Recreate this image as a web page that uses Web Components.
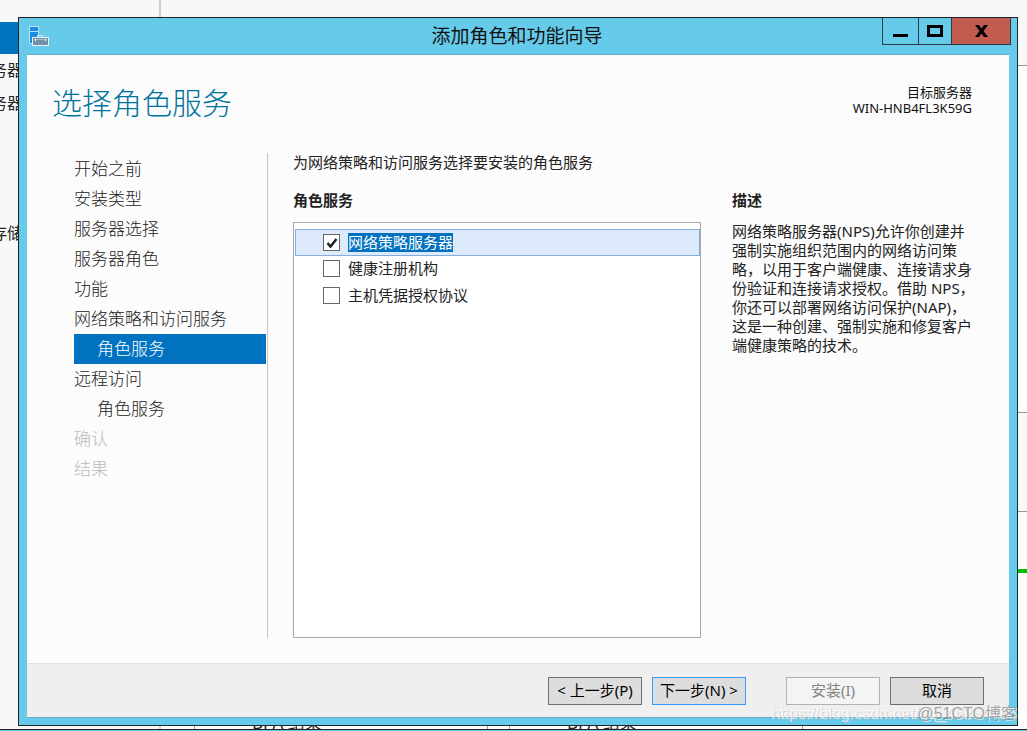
<!DOCTYPE html>
<html lang="zh-CN">
<head>
<meta charset="utf-8">
<title>添加角色和功能向导</title>
<style>
html, body { margin: 0; height: 100%; overflow: hidden; }
body { font: 15px/20px "Noto Sans", "Noto Sans CJK SC", sans-serif; color: #222; }
</style>
</head>
<body>
<server-desktop>
  <wizard-window heading="添加角色和功能向导">
    <wizard-page heading="选择角色服务">
      <target-server slot="target" name="WIN-HNB4FL3K59G">目标服务器</target-server>
      <wizard-nav slot="nav">
        <nav-step>开始之前</nav-step>
        <nav-step>安装类型</nav-step>
        <nav-step>服务器选择</nav-step>
        <nav-step>服务器角色</nav-step>
        <nav-step>功能</nav-step>
        <nav-step>网络策略和访问服务</nav-step>
        <nav-step sub current>角色服务</nav-step>
        <nav-step>远程访问</nav-step>
        <nav-step sub>角色服务</nav-step>
        <nav-step disabled>确认</nav-step>
        <nav-step disabled>结果</nav-step>
      </wizard-nav>
      <role-list>
        <role-item checked selected>网络策略服务器</role-item>
        <role-item>健康注册机构</role-item>
        <role-item>主机凭据授权协议</role-item>
      </role-list>
      <role-description slot="description">网络策略服务器(NPS)允许你创建并强制实施组织范围内的网络访问策略，以用于客户端健康、连接请求身份验证和连接请求授权。借助 NPS，你还可以部署网络访问保护(NAP)，这是一种创建、强制实施和修复客户端健康策略的技术。</role-description>
    </wizard-page>
    <wizard-footer slot="footer">
      <wizard-button>&lt; 上一步(P)</wizard-button>
      <wizard-button primary>下一步(N) &gt;</wizard-button>
      <wizard-button class="apart" disabled>安装(I)</wizard-button>
      <wizard-button>取消</wizard-button>
    </wizard-footer>
  </wizard-window>
  <page-watermark slot="overlay"></page-watermark>
</server-desktop>

<script>
const define = (name, html, setup) => {
  const template = document.createElement('template');
  template.innerHTML = html;
  customElements.define(name, class extends HTMLElement {
    connectedCallback() {
      if (this.shadowRoot) return;
      this.attachShadow({ mode: 'open' }).append(template.content.cloneNode(true));
      if (setup) setup(this, this.shadowRoot);
    }
  });
};

define('server-desktop', `
<style>
:host { display: block; position: relative; height: 100vh; overflow: hidden; background: #fff; }
.back { display: flex; flex-direction: column; height: 100%; }
.main { flex: 1; display: grid; grid-template-columns: 161px 1fr; min-height: 0; }
.side { background: #f8f8f8; border-right: 2px solid #d0d0d0; padding-top: 22px; overflow: hidden; }
.active { height: 32px; background: #0072c0; }
.side span { display: block; height: 33px; line-height: 33px; font-size: 16px; margin-left: -9px; }
.side .gap { margin-top: 97px; }
.tiles { display: flex; flex-direction: column; background: #fcfcfc; min-height: 0; }
.tiles div { box-sizing: border-box; border-bottom: 1px solid #999; }
.top { height: 66px; background: #f8f8f8; }
.white { height: 347px; background: #fff; }
.grey { height: 99px; background: #f8f8f8; }
.tiles .green { margin-top: 57px; height: 4px; background: #00c000; border: 0; }
.tiles .cards { margin-top: auto; display: flex; gap: 21px; padding-left: 33px; border: 0; background: #fff; }
.cards span { box-sizing: border-box; width: 294px; height: 20px; border: solid #999; border-width: 0 1px; padding-left: 57px; font-size: 17px; line-height: 28px; overflow: hidden; }
.bar { height: 1px; background: #66cbea; border-top: 1px solid #222; }
.overlay { position: absolute; right: 10px; bottom: 7px; }
.window { position: absolute; inset: 17px 9px 5px 18px; display: grid; }
</style>
<div class="back">
  <div class="main">
    <div class="side"><div class="active"></div><span>务器</span><span>务器</span><span class="gap">存储</span></div>
    <div class="tiles"><div class="top"></div><div class="white"></div><div class="grey"></div><div class="green"></div>
      <div class="cards"><span>BPA 结果</span><span>BPA 结果</span></div></div>
  </div>
  <div class="bar"></div>
</div>
<div class="window"><slot></slot></div>
<div class="overlay"><slot name="overlay"></slot></div>`);

define('wizard-window', `
<style>
:host { display: flex; flex-direction: column; min-height: 0; border: 1px solid #222; background: #66cbea; padding: 0 8px 7px; }
header { display: grid; grid-template-columns: 125px 1fr 127px; height: 36px; border-bottom: 1px solid #6ba9c3; }
header svg.app { margin: 8px 0 0 2px; }
h1 { margin: 0; font: inherit; font-size: 19px; line-height: 36px; text-align: center; color: #111; }
.controls { display: flex; height: 26px; border: 1px solid #2c3a42; border-top: 0; margin-right: -2px; }
.controls button { box-sizing: border-box; flex: 36 1 0; border: 0; border-right: 1px solid #2c3a42; background: none; padding: 0; display: grid; place-items: center; }
.controls button:nth-child(2) { flex-grow: 33; }
.controls .close { flex-grow: 59; background: #c25b50; border-right: 0; }
main { flex: 1; display: flex; flex-direction: column; min-height: 0; background: #fcfcfc; border-bottom: 1px solid #6ba9c3; }
</style>
<header>
  <svg class="app" width="21" height="21" viewBox="0 0 21 21" aria-hidden="true">
    <rect x="0.5" y="0.5" width="9" height="17" fill="#1e8ae0" stroke="#b4e2f7"/>
    <path d="M1 5.5H9" stroke="#b4e2f7"/>
    <path d="M8.500 11V9.500H13.500V11" fill="none" stroke="#d5e8f0"/>
    <rect x="3.500" y="11.500" width="16" height="8" fill="#7290a8" stroke="#e6f0f5"/>
    <path d="M5 13.500H18" stroke="#a3b8c8"/><path d="M6.500 13V15M16.500 13V15" stroke="#fff"/>
  </svg>
  <h1></h1>
  <div class="controls">
    <button aria-label="最小化"><svg width="15" height="12"><rect y="9" width="15" height="3"/></svg></button>
    <button aria-label="最大化"><svg width="16" height="12"><rect x="1.500" y="1.500" width="13" height="9" fill="none" stroke="#000" stroke-width="3"/></svg></button>
    <button class="close" aria-label="关闭"><svg width="13" height="12"><path d="M0 0H4L6.500 3.500L9 0H13L8.500 6L13 12H9L6.500 8.500L4 12H0L4.500 6Z"/></svg></button>
  </div>
</header>
<main><slot></slot><slot name="footer"></slot></main>`, (host, root) => {
  root.querySelector('h1').textContent = host.getAttribute('heading');
});

define('wizard-page', `
<style>
:host { flex: 1; min-height: 0; display: flex; flex-direction: column; padding: 28px 32px 25px 25px; }
header { display: flex; justify-content: space-between; height: 70px; padding-right: 5px; }
h2 { margin: 0; font-size: 30px; line-height: 40px; font-weight: 300; color: #00739c; }
.body { flex: 1; min-height: 0; display: grid; grid-template-columns: 216px 1fr 245px; }
.list { display: flex; padding: 0 31px 0 25px; min-width: 0; }
</style>
<header><h2></h2><slot name="target"></slot></header>
<div class="body"><slot name="nav"></slot><div class="list"><slot></slot></div><slot name="description"></slot></div>`, (host, root) => {
  root.querySelector('h2').textContent = host.getAttribute('heading');
});

define('target-server', `
<style>
:host { display: block; text-align: right; font-size: 13px; line-height: 16px; color: #111; padding-top: 1px; }
</style><slot></slot><div></div>`, (host, root) => {
  root.querySelector('div').textContent = host.getAttribute('name');
});

define('wizard-nav', `
<style>
:host { display: block; border-right: 1px solid #c4c4c4; padding: 1px 1px 0 22px; }
</style><nav><slot></slot></nav>`);

define('nav-step', `
<style>
:host { display: block; font-size: 17px; font-weight: 300; }
a { display: block; color: #222; text-decoration: none; line-height: 30px; white-space: nowrap; }
:host([sub]) a { padding-left: 23px; }
:host([current]) a { background: #0072c0; color: #fff; }
:host([disabled]) a { color: #bbb; }
</style><a href="#"><slot></slot></a>`);

define('role-list', `
<style>
:host { flex: 1; display: flex; flex-direction: column; min-width: 0; }
h3 { margin: 19px 0 12px; font-size: 15px; line-height: 20px; font-weight: 600; }
p { margin: 0; line-height: 18px; }
.box { flex: 1; border: 1px solid #a8a8a8; background: #fff; padding: 6px 0 0 1px; }
</style>
<p>为网络策略和访问服务选择要安装的角色服务</p>
<h3>角色服务</h3>
<div class="box"><slot></slot></div>`);

define('role-item', `
<style>
:host { display: block; }
label { box-sizing: border-box; display: flex; align-items: center; gap: 8px; height: 27px; padding-left: 27px; border: 1px solid transparent; }
:host([selected]) { margin-bottom: -1px; }
:host([selected]) label { background: #dceafc; border-color: #84acdd; }
input { appearance: none; box-sizing: border-box; width: 17px; height: 17px; margin: 0; border: 1px solid #666; background: #fff; }
input:checked { background: #fff url("data:image/svg+xml,%3Csvg xmlns='http://www.w3.org/2000/svg' width='15' height='15'%3E%3Cpath d='M3.500 8L6.500 11.500L12.500 4' fill='none' stroke='%23222' stroke-width='2.500'/%3E%3C/svg%3E"); }
:host([selected]) span { background: #0072c0; color: #fff; }
span { line-height: 19px; }
</style>
<label><input type="checkbox"><span><slot></slot></span></label>`, (host, root) => {
  root.querySelector('input').checked = host.hasAttribute('checked');
});

define('role-description', `
<style>
:host { display: block; padding-top: 37px; }
h3 { margin: 0 0 12px; font-size: 15px; line-height: 20px; font-weight: 600; }
p { margin: 0; line-height: 19px; text-spacing-trim: space-all; }
</style><h3>描述</h3><p><slot></slot></p>`);

define('wizard-footer', `
<style>
:host { display: flex; justify-content: flex-end; gap: 10px; padding: 13px 25px 12px; background: #efefef; border-top: 1px solid #dfdfdf; }
::slotted(.apart) { margin-left: 30px; }
</style><slot></slot>`);

define('wizard-button', `
<style>
:host { display: block; }
button { box-sizing: border-box; width: 94px; height: 28px; padding: 0 0 2px; border: 1px solid #707070; background: #ddd; color: #000; font: inherit; white-space: nowrap; }
:host([primary]) button { border-color: #3399ff; }
button:disabled { border-color: #adb2b5; background: #f4f4f4; color: #838383; }
</style><button><slot></slot></button>`, (host, root) => {
  root.querySelector('button').disabled = host.hasAttribute('disabled');
});

define('page-watermark', `
<style>
:host { display: block; pointer-events: none; font-family: "Liberation Sans", "Noto Sans CJK SC", sans-serif; white-space: nowrap; }
.stack { display: grid; justify-items: end; }
.stack span { grid-area: 1 / 1; line-height: 20px; }
.url { font-size: 16px; color: #ffffffb0; text-shadow: 1px 1px #b8b8b880; }
.tag { font-size: 16px; color: #888b; text-shadow: 1px 1px #fff8; }
</style><div class="stack"><span class="url">https://blog.csdn.net/qq_46254436</span><span class="tag">@51CTO博客</span></div>`);
</script>
</body>
</html>
